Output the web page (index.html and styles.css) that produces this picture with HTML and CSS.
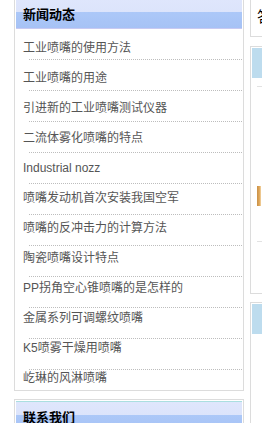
FILE: index.html
```html
<!DOCTYPE html>
<html>
<head>
	<meta charset="utf-8">
	<title>新闻动态</title>
	<link rel="stylesheet" href="styles.css">
</head>
<body>
	<div class="page">
		<div class="main">
			<div class="box news">
				<h2 class="box-title">新闻动态</h2>
				<ul class="news-list">
					<li><a href="#">工业喷嘴的使用方法</a></li>
					<li><a href="#">工业喷嘴的用途</a></li>
					<li><a href="#">引进新的工业喷嘴测试仪器</a></li>
					<li><a href="#">二流体雾化喷嘴的特点</a></li>
					<li><a href="#">Industrial nozz</a></li>
					<li><a href="#">喷嘴发动机首次安装我国空军</a></li>
					<li><a href="#">喷嘴的反冲击力的计算方法</a></li>
					<li><a href="#">陶瓷喷嘴设计特点</a></li>
					<li><a href="#">PP拐角空心锥喷嘴的是怎样的</a></li>
					<li><a href="#">金属系列可调螺纹喷嘴</a></li>
					<li><a href="#">K5喷雾干燥用喷嘴</a></li>
					<li><a href="#">屹琳的风淋喷嘴</a></li>
				</ul>
			</div>
			<div class="box contact">
				<h2 class="box-title">联系我们</h2>
				<p class="contact-text">电话：</p>
			</div>
		</div>
		<div class="side">
			<div class="side-box side-top">答疑</div>
			<div class="side-box side-products">
				<div class="side-title"></div>
				<div class="pro-item">
					<div class="pro-pic"></div>
				</div>
				<div class="pro-item pro-last"></div>
			</div>
			<div class="side-box side-more">
				<div class="side-title"></div>
			</div>
		</div>
	</div>
</body>
</html>
```

FILE: styles.css
```css
html, body {
	overflow: hidden;
}

body {
	margin: 0;
	background-color: #fff;
	font-family: "Liberation Sans", "Noto Sans CJK SC", sans-serif;
	font-size: 12px;
}

.page {
	display: flex;
	align-items: flex-start;
	gap: 6px;
	width: 500px;
	padding-left: 14px;
}

.main {
	width: 230px;
	flex-shrink: 0;
	margin-top: -4px;
}

.box {
	border: 1px solid #dcdcdc;
	padding: 1px;
}

.contact {
	margin-top: 8px;
	height: 200px;
}

.box-title {
	margin: 0;
	height: 29px;
	line-height: 29px;
	padding-left: 7px;
	border-top: 1px solid #aadfe0;
	border-bottom: 1px solid #c8caf2;
	background: linear-gradient(to bottom, #dfe6fc 0, #dce4fb 13px, #acc8f8 13px, #a6c2f5 100%);
	color: #000;
	font-family: "Noto Sans CJK SC", sans-serif;
	font-size: 13px;
	font-weight: bold;
}

.news-list {
	list-style: none;
	margin: 0;
	padding: 9px 0 1px 0;
	background:
		repeating-linear-gradient(to right, transparent 0 1px, #fff 1px 2px) 13px 0 / calc(100% - 13px) 100% no-repeat,
		repeating-linear-gradient(to bottom, transparent 0 30px, #bdbdbd 30px 31px) 13px 0 / calc(100% - 13px) 100% no-repeat;
	background-color: #fff;
}

.news-list li {
	line-height: 20px;
	margin-bottom: 10px;
	padding-left: 7px;
}

.news-list li:last-child {
	margin-bottom: 0;
}

.news-list a {
	color: #555;
	text-decoration: none;
}

.contact-text {
	margin: 10px 7px;
	color: #555;
}

.side {
	width: 200px;
	flex-shrink: 0;
}

.side-box {
	border: 1px solid #dcdcdc;
	padding: 1px;
}

.side-top {
	margin-top: -10px;
	padding: 15px 6px 10px 6px;
	line-height: 20px;
	font-family: "Noto Sans CJK SC", sans-serif;
	font-size: 15px;
	color: #000;
}

.side-products {
	margin-top: 9px;
}

.side-more {
	margin-top: 8px;
	height: 200px;
}

.side-title {
	height: 30px;
	background-color: #bddcee;
}

.pro-item {
	margin: 8px 0 0 5px;
	border-top: 1px solid #e2e2e2;
	height: 154px;
}

.pro-item.pro-last {
	margin-top: 0;
	height: 50px;
}

.pro-pic {
	width: 4px;
	height: 20px;
	margin-top: 99px;
	background: linear-gradient(to right, #c89048, #e0a85a 60%, #f3d6a8);
}
```
